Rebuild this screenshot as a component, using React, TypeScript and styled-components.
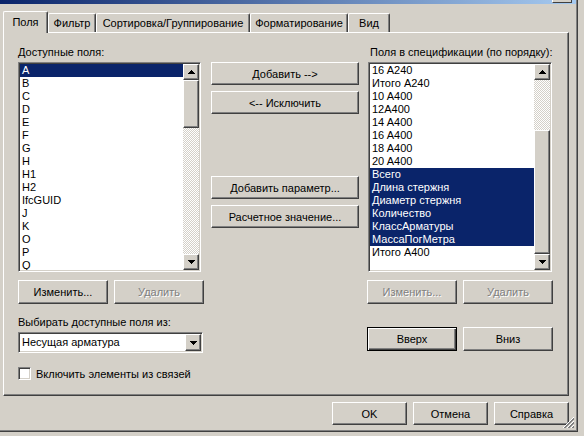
import React from 'react';
import styled, { createGlobalStyle, css } from 'styled-components';

const GlobalStyle = createGlobalStyle`
  html, body { margin: 0; padding: 0; background: #d4d0c8; }
  body { font-family: "Liberation Sans", Arial, sans-serif; font-size: 11px; color: #000; }
  * { box-sizing: border-box; }
`;

const raised = css`
  background: #d4d0c8;
  border-top: 1px solid #fff;
  border-left: 1px solid #fff;
  border-right: 1px solid #404040;
  border-bottom: 1px solid #404040;
  box-shadow: inset -1px -1px 0 #808080;
`;

const sunken = css`
  border-top: 1px solid #808080;
  border-left: 1px solid #808080;
  border-right: 1px solid #fff;
  border-bottom: 1px solid #fff;
  box-shadow: inset 1px 1px 0 #404040, inset -1px -1px 0 #d4d0c8;
`;

const Window = styled.div`
  position: relative;
  width: 578px;
  height: 432px;
  background: #d4d0c8;
  border-right: 1px solid #404040;
  border-bottom: 1px solid #404040;
  box-shadow: inset -1px -1px 0 #808080;
  display: flex;
  flex-direction: column;
`;

const TitleBar = styled.div`
  height: 4px;
  margin-right: 1px;
  background: linear-gradient(to right, #0a246a, #a6caf0);
  display: flex;
  justify-content: flex-end;
  padding-right: 4px;
`;

const TitleButton = styled.div`
  width: 20px;
  height: 3px;
  background: #d4d0c8;
  border-left: 1px solid #fff;
  border-right: 1px solid #404040;
  border-bottom: 1px solid #404040;
`;

const TabStrip = styled.div`
  display: flex;
  align-items: flex-end;
  height: 21px;
  margin: 7px 0 0 3px;
  position: relative;
  z-index: 1;
`;

const Tab = styled.div<{ $w: number; $active?: boolean }>`
  width: ${p => p.$w}px;
  height: ${p => (p.$active ? 22 : 19)}px;
  margin-bottom: ${p => (p.$active ? -1 : 0)}px;
  padding-bottom: ${p => (p.$active ? 2 : 0)}px;
  background: #d4d0c8;
  border-top: 1px solid #fff;
  border-left: 1px solid #fff;
  border-right: 1px solid #404040;
  box-shadow: inset -1px 0 0 #808080;
  border-radius: 2px 2px 0 0;
  display: flex;
  align-items: center;
  justify-content: center;
  white-space: nowrap;
`;

const Panel = styled.div`
  height: 364px;
  margin: 0 8px 0 3px;
  border-top: 1px solid #fff;
  border-left: 1px solid #fff;
  border-right: 1px solid #404040;
  border-bottom: 1px solid #404040;
  box-shadow: inset -1px -1px 0 #808080;
  display: flex;
  gap: 8px;
  padding: 13px 0 0 14px;
`;

const Column = styled.div<{ $w: number }>`
  width: ${p => p.$w}px;
  display: flex;
  flex-direction: column;
  align-items: flex-start;
`;

const Label = styled.div<{ $mt?: number }>`
  height: 13px;
  line-height: 13px;
  margin-top: ${p => p.$mt ?? 0}px;
  white-space: nowrap;
`;

const ListBox = styled.div<{ $w: number; $ml?: number }>`
  ${sunken};
  width: ${p => p.$w}px;
  height: 210px;
  margin-top: 3px;
  margin-left: ${p => p.$ml ?? 0}px;
  background: #fff;
  display: flex;
  padding: 1px;
`;

const Items = styled.div`
  flex: 1;
  overflow: hidden;
`;

const Item = styled.div<{ $sel?: boolean }>`
  height: 13px;
  line-height: 13px;
  padding-left: 2px;
  white-space: nowrap;
  background: ${p => (p.$sel ? '#0a246a' : 'transparent')};
  color: ${p => (p.$sel ? '#fff' : '#000')};
`;

const ScrollBar = styled.div`
  width: 16px;
  display: flex;
  flex-direction: column;
`;

const ScrollButton = styled.div<{ $h?: number }>`
  ${raised};
  height: ${p => p.$h ?? 16}px;
  flex: none;
  display: flex;
  align-items: center;
  justify-content: center;
`;

const Track = styled.div<{ $h: number }>`
  height: ${p => p.$h}px;
  flex: none;
  background: repeating-conic-gradient(#fff 0 25%, #d4d0c8 0 50%) 0 0 / 2px 2px;
`;

const Thumb = styled.div<{ $h: number }>`
  ${raised};
  height: ${p => p.$h}px;
  flex: none;
`;

const Row = styled.div<{ $mt: number; $gap?: number }>`
  display: flex;
  gap: ${p => p.$gap ?? 6}px;
  margin-top: ${p => p.$mt}px;
`;

const Button = styled.button<{ $w: number; $h?: number; $mt?: number; $default?: boolean }>`
  ${raised};
  width: ${p => p.$w}px;
  height: ${p => p.$h ?? 23}px;
  margin-top: ${p => p.$mt ?? 0}px;
  padding: 0;
  font-family: inherit;
  font-size: 11px;
  color: #000;
  white-space: nowrap;
  flex: none;
  &:disabled {
    color: #808080;
    text-shadow: 1px 1px 0 #fff;
  }
  ${p =>
    p.$default &&
    css`
      border: 1px solid #000;
      box-shadow: inset 1px 1px 0 #fff, inset -1px -1px 0 #404040, inset -2px -2px 0 #808080;
    `}
`;

const Combo = styled.div`
  ${sunken};
  width: 185px;
  height: 21px;
  margin-top: 3px;
  background: #fff;
  display: flex;
  padding: 1px;
`;

const ComboText = styled.div`
  flex: 1;
  line-height: 17px;
  padding-left: 2px;
  white-space: nowrap;
`;

const CheckRow = styled.label`
  display: flex;
  align-items: center;
  gap: 5px;
  margin-top: 14px;
  height: 13px;
  white-space: nowrap;
`;

const CheckBox = styled.span`
  ${sunken};
  width: 13px;
  height: 13px;
  background: #fff;
  flex: none;
`;

const Footer = styled.div`
  display: flex;
  justify-content: flex-end;
  gap: 6px;
  margin-top: 6px;
  padding-right: 8px;
`;

const Grip = styled.svg`
  position: absolute;
  right: 2px;
  bottom: 2px;
`;

const Arrow = ({ down }: { down?: boolean }) => (
  <svg width="7" height="4" viewBox="0 0 7 4" shapeRendering="crispEdges">
    {down ? (
      <>
        <rect x="0" y="0" width="7" height="1" fill="#000" />
        <rect x="1" y="1" width="5" height="1" fill="#000" />
        <rect x="2" y="2" width="3" height="1" fill="#000" />
        <rect x="3" y="3" width="1" height="1" fill="#000" />
      </>
    ) : (
      <>
        <rect x="3" y="0" width="1" height="1" fill="#000" />
        <rect x="2" y="1" width="3" height="1" fill="#000" />
        <rect x="1" y="2" width="5" height="1" fill="#000" />
        <rect x="0" y="3" width="7" height="1" fill="#000" />
      </>
    )}
  </svg>
);

const leftItems = ['A', 'B', 'C', 'D', 'E', 'F', 'G', 'H', 'H1', 'H2', 'IfcGUID', 'J', 'K', 'O', 'P', 'Q'];
const rightItems: [string, boolean][] = [
  ['16 A240', false],
  ['Итого A240', false],
  ['10 A400', false],
  ['12A400', false],
  ['14 A400', false],
  ['16 A400', false],
  ['18 A400', false],
  ['20 A400', false],
  ['Всего', true],
  ['Длина стержня', true],
  ['Диаметр стержня', true],
  ['Количество', true],
  ['КлассАрматуры', true],
  ['МассаПогМетра', true],
  ['Итого A400', false],
];

const tabs: [string, number][] = [
  ['Поля', 45],
  ['Фильтр', 48],
  ['Сортировка/Группирование', 154],
  ['Форматирование', 98],
  ['Вид', 42],
];

export default function App() {
  return (
    <>
      <GlobalStyle />
      <Window>
        <TitleBar>
          <TitleButton />
        </TitleBar>
        <TabStrip>
          {tabs.map(([t, w], i) => (
            <Tab key={t} $w={w} $active={i === 0}>
              {t}
            </Tab>
          ))}
        </TabStrip>
        <Panel>
          <Column $w={185}>
            <Label>Доступные поля:</Label>
            <ListBox $w={183}>
              <Items>
                {leftItems.map((t, i) => (
                  <Item key={t} $sel={i === 0}>
                    {t}
                  </Item>
                ))}
              </Items>
              <ScrollBar>
                <ScrollButton>
                  <Arrow />
                </ScrollButton>
                <Thumb $h={48} />
                <Track $h={126} />
                <ScrollButton>
                  <Arrow down />
                </ScrollButton>
              </ScrollBar>
            </ListBox>
            <Row $mt={8}>
              <Button $w={90} $h={24}>Изменить...</Button>
              <Button $w={90} $h={24} disabled>
                Удалить
              </Button>
            </Row>
            <Label $mt={12}>Выбирать доступные поля из:</Label>
            <Combo>
              <ComboText>Несущая арматура</ComboText>
              <ScrollButton $h={17} style={{ width: 16 }}>
                <Arrow down />
              </ScrollButton>
            </Combo>
            <CheckRow>
              <CheckBox />
              Включить элементы из связей
            </CheckRow>
          </Column>
          <Column $w={148}>
            <Button $w={148} $mt={16}>Добавить --&gt;</Button>
            <Button $w={148} $mt={6}>&lt;-- Исключить</Button>
            <Button $w={148} $mt={62}>Добавить параметр...</Button>
            <Button $w={148} $mt={6}>Расчетное значение...</Button>
          </Column>
          <Column $w={186}>
            <Label style={{ marginLeft: 3 }}>Поля в спецификации (по порядку):</Label>
            <ListBox $w={184} $ml={1}>
              <Items>
                {rightItems.map(([t, s]) => (
                  <Item key={t} $sel={s}>
                    {t}
                  </Item>
                ))}
              </Items>
              <ScrollBar>
                <ScrollButton>
                  <Arrow />
                </ScrollButton>
                <Track $h={50} />
                <Thumb $h={124} />
                <ScrollButton>
                  <Arrow down />
                </ScrollButton>
              </ScrollBar>
            </ListBox>
            <Row $mt={8}>
              <Button $w={90} $h={24} disabled>
                Изменить...
              </Button>
              <Button $w={90} $h={24} disabled>
                Удалить
              </Button>
            </Row>
            <Row $mt={23}>
              <Button $w={90} $h={24} $default>
                Вверх
              </Button>
              <Button $w={90} $h={24}>Вниз</Button>
            </Row>
          </Column>
        </Panel>
        <Footer>
          <Button $w={75}>OK</Button>
          <Button $w={75}>Отмена</Button>
          <Button $w={75}>Справка</Button>
        </Footer>
        <Grip width="12" height="12" viewBox="0 0 12 12" shapeRendering="crispEdges">
          {[0, 4, 8].map(o => (
            <g key={o}>
              <line x1={11} y1={o} x2={o} y2={11} stroke="#fff" strokeWidth={1} />
              <line x1={11} y1={o + 1} x2={o + 1} y2={11} stroke="#808080" strokeWidth={1} />
              <line x1={11} y1={o + 2} x2={o + 2} y2={11} stroke="#808080" strokeWidth={1} />
            </g>
          ))}
        </Grip>
      </Window>
    </>
  );
}
